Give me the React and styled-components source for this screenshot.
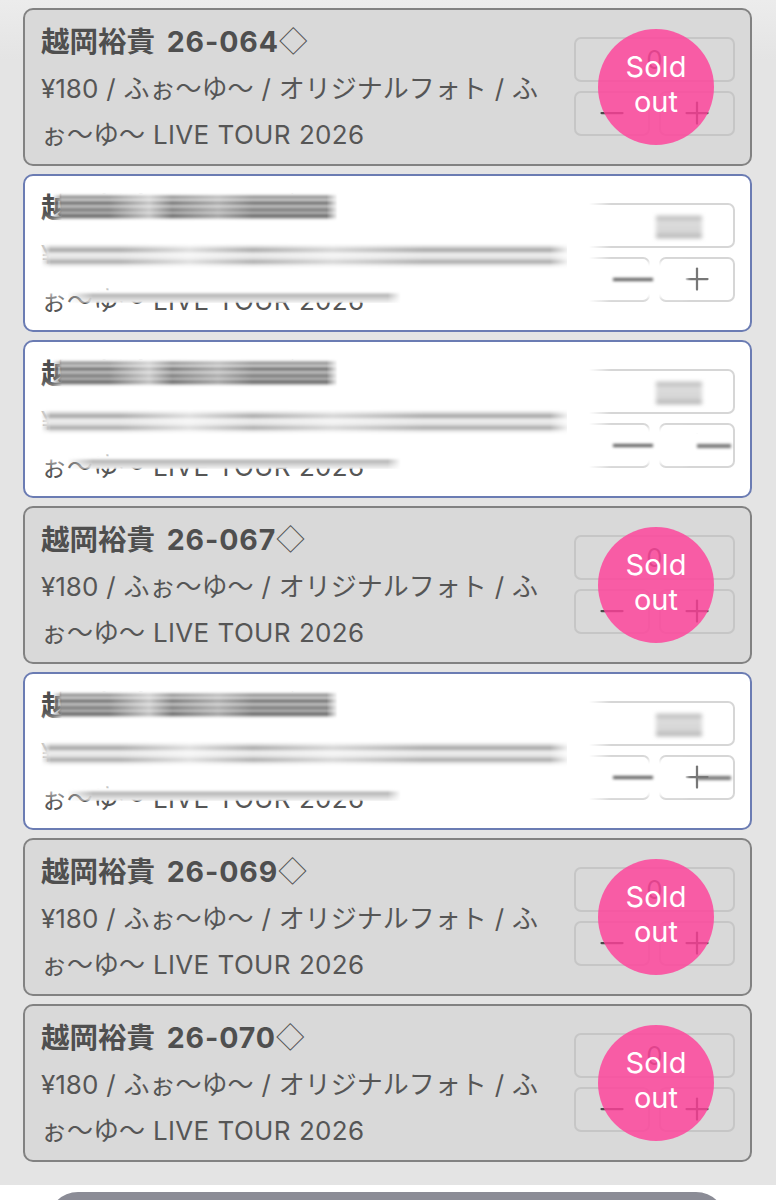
import React from "react";
import styled, { createGlobalStyle } from "styled-components";
import { Minus, Plus } from "lucide-react";

const blocks = [
  { x: 27, y: 16, w: 286, h: 32, kind: "title" },
  { x: 16, y: 62, w: 530, h: 34, kind: "line" },
  { x: 42, y: 113, w: 334, h: 14, kind: "tail" },
];

const items = [
  { no: "064", soldOut: true },
  { no: "065", smear: { plus: true, plusSmear: false } },
  { no: "066", smear: { plus: false, plusSmear: true } },
  { no: "067", soldOut: true },
  { no: "068", smear: { plus: true, plusSmear: true } },
  { no: "069", soldOut: true },
  { no: "070", soldOut: true },
];

const App = () => {
  return (
    <Page>
      <GlobalStyle />
      <List>
        {items.map((item) => (
          <Card key={item.no} $soldOut={item.soldOut}>
            <Info>
              <Title>
                越岡裕貴 <Code>26-{item.no}</Code>
                <Mark>◇</Mark>
              </Title>
              <Desc>
                ¥180 / ふぉ〜ゆ〜 / オリジナルフォト / ふぉ〜ゆ〜 <Tour>LIVE TOUR 2026</Tour>
              </Desc>
            </Info>
            <Controls>
              <Qty $soldOut={item.soldOut} $hidden={!!item.smear}>
                0
              </Qty>
              <Buttons>
                <StepButton $soldOut={item.soldOut}>
                  <Minus size={36} strokeWidth={1.5} />
                </StepButton>
                <StepButton $soldOut={item.soldOut}>
                  <Plus size={36} strokeWidth={1.5} />
                </StepButton>
              </Buttons>
              {item.soldOut && (
                <SoldOut>
                  Sold
                  <br />
                  out
                </SoldOut>
              )}
            </Controls>
            {item.smear && (
              <>
                <LeftHaze />
                {blocks.map((b) => (
                  <Smear key={b.kind} $x={b.x} $y={b.y} $w={b.w} $h={b.h} $kind={b.kind} />
                ))}
                <ControlFade />
                <MinusCover />
                <QtySmear />
                <MinusSmear />
                {!item.smear.plus && <PlusCover />}
                {item.smear.plusSmear && <PlusSmear />}
              </>
            )}
          </Card>
        ))}
      </List>
      <Footer>
        <SubmitBar />
      </Footer>
    </Page>
  );
};

const GlobalStyle = createGlobalStyle`
  html, body {
    margin: 0;
    padding: 0;
    background: #fff;
  }
  * {
    box-sizing: border-box;
  }
`;
const Page = styled.div`
  height: 1200px;
  overflow: hidden;
  font-family: Inter, "Noto Sans CJK JP", sans-serif;
`;
const List = styled.div`
  display: flex;
  flex-direction: column;
  gap: 8px;
  height: 1185px;
  padding: 8px 24px 0 23px;
  background: linear-gradient(#ececec, #e4e4e4 60px);
`;
const Card = styled.div`
  position: relative;
  display: flex;
  align-items: center;
  justify-content: space-between;
  height: 158px;
  padding: 0 15px 0 16px;
  border: 2px solid ${(p) => (p.$soldOut ? "#828282" : "#6b7cb3")};
  border-radius: 10px;
  background: ${(p) => (p.$soldOut ? "#d9d9d9" : "#fff")};
  color: #565656;
`;
const Info = styled.div`
  width: 500px;
  margin-top: 1px;
`;
const Title = styled.div`
  margin-bottom: 1px;
  font-size: 28.5px;
  font-weight: 700;
  word-spacing: 5px;
  line-height: 46px;
  color: #4f4f4f;
  white-space: nowrap;
`;
const Code = styled.span`
  letter-spacing: 0.9px;
`;
const Mark = styled.span`
  font-family: "Noto Sans CJK JP", sans-serif;
  font-weight: 300;
`;
const Desc = styled.div`
  font-size: 26px;
  word-spacing: 0.6px;
  line-height: 46px;
  line-break: anywhere;
`;
const Tour = styled.span`
  letter-spacing: 0.3px;
`;
const Controls = styled.div`
  position: relative;
  display: flex;
  flex-direction: column;
  gap: 9px;
  width: 161px;
  margin-top: -2px;
`;
const Qty = styled.div`
  display: flex;
  align-items: center;
  justify-content: center;
  height: 45px;
  border: 2px solid ${(p) => (p.$soldOut ? "#c6c6c6" : "#d6d6d6")};
  border-radius: 7px;
  color: ${(p) => (p.$hidden ? "transparent" : "#555")};
  font-size: 26px;
`;
const Buttons = styled.div`
  display: flex;
  gap: 9px;
`;
const StepButton = styled.div`
  display: flex;
  flex: 1;
  align-items: center;
  justify-content: center;
  height: 45px;
  border: 2px solid ${(p) => (p.$soldOut ? "#c6c6c6" : "#d6d6d6")};
  border-radius: 7px;
  color: ${(p) => (p.$soldOut ? "#4a4a4a" : "#777")};
`;
const SoldOut = styled.div`
  position: absolute;
  top: -8px;
  left: 24px;
  display: flex;
  align-items: center;
  justify-content: center;
  width: 116px;
  height: 116px;
  padding-bottom: 6px;
  border-radius: 50%;
  background: rgba(255, 65, 154, 0.82);
  color: #fff;
  font-size: 29px;
  line-height: 35px;
  text-align: center;
`;
const Smear = styled.div`
  position: absolute;
  left: ${(p) => p.$x}px;
  top: ${(p) => p.$y}px;
  width: ${(p) => p.$w}px;
  height: ${(p) => p.$h}px;
  background: ${(p) =>
    p.$kind === "title"
      ? `linear-gradient(90deg, transparent 20%, rgba(255,255,255,.55) 34%, transparent 42%, rgba(255,255,255,.35) 58%, transparent 70%),
         linear-gradient(180deg, #fff 0 2px, #8a8a8a 5px, #d4d4d4 8px, #666 11px, #c8c8c8 14px, #777 18px, #bbb 21px, #5c5c5c 24px, #fff 28px)`
      : p.$kind === "line"
      ? `linear-gradient(90deg, transparent 15%, rgba(255,255,255,.6) 28%, transparent 40%, rgba(255,255,255,.5) 55%, transparent 72%),
         linear-gradient(180deg, #fff 0 6px, #d8d8d8 9px, #a4a4a4 12px, #efefef 16px, #e4e4e4 20px, #a8a8a8 24px, #e8e8e8 27px, #fff 30px)`
      : "linear-gradient(180deg, #fff 0, #fff 3px, #b4b4b4 6px, #d8d8d8 10px, #f4f4f4 14px)"};
  filter: blur(1.2px);
  mask-image: linear-gradient(90deg, transparent, #000 ${(p) => (p.$kind === "tail" ? 26 : 10)}px, #000 96%, transparent);
`;
const LeftHaze = styled.div`
  position: absolute;
  left: 14px;
  top: 46px;
  width: 30px;
  height: 74px;
  background: rgba(255, 255, 255, 0.85);
  filter: blur(6px);
`;
const ControlFade = styled.div`
  position: absolute;
  left: 542px;
  top: 24px;
  width: 44px;
  height: 106px;
  background: linear-gradient(90deg, #fff 50%, transparent);
`;
const MinusCover = styled.div`
  position: absolute;
  left: 570px;
  top: 86px;
  width: 92px;
  height: 36px;
  background: #fff;
  filter: blur(2px);
`;
const QtySmear = styled.div`
  position: absolute;
  left: 631px;
  top: 40px;
  width: 46px;
  height: 22px;
  background: linear-gradient(#aaa, #ddd 25%, #d4d4d4 80%, #999);
  filter: blur(2px);
`;
const MinusSmear = styled.div`
  position: absolute;
  left: 588px;
  top: 102px;
  width: 40px;
  height: 3px;
  background: #555;
  filter: blur(1.5px);
`;
const PlusCover = styled.div`
  position: absolute;
  left: 650px;
  top: 90px;
  width: 56px;
  height: 30px;
  background: #fff;
  filter: blur(1px);
`;
const PlusSmear = styled.div`
  position: absolute;
  left: 672px;
  top: 102px;
  width: 34px;
  height: 4px;
  background: #777;
  filter: blur(1.5px);
`;
const Footer = styled.div`
  display: flex;
  justify-content: center;
  padding: 7px 50px 0 48px;
`;
const SubmitBar = styled.div`
  width: 100%;
  height: 60px;
  border-radius: 30px;
  background: #8b8c96;
`;

export default App;
